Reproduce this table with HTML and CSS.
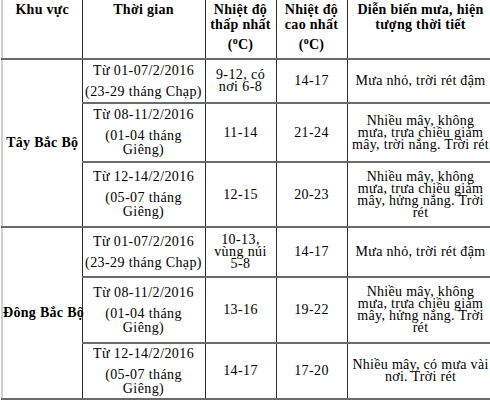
FILE: index.html
```html
<!DOCTYPE html>
<html lang="vi">
<head>
<meta charset="utf-8">
<title>Dự báo thời tiết</title>
<link rel="stylesheet" href="styles.css">
</head>
<body>
<table class="forecast">
  <colgroup>
    <col class="c-area"><col class="c-time"><col class="c-min"><col class="c-max"><col class="c-desc">
  </colgroup>
  <thead>
    <tr class="r-head">
      <th>Khu vực</th>
      <th>Thời gian</th>
      <th><p>Nhiệt độ thấp nhất</p><p class="unit">(<sup>o</sup>C)</p></th>
      <th><p>Nhiệt độ cao nhất</p><p class="unit">(<sup>o</sup>C)</p></th>
      <th class="desc"><p>Diễn biến mưa, hiện<br>tượng thời tiết</p></th>
    </tr>
  </thead>
  <tbody>
    <tr class="r1">
      <td class="area" rowspan="3">Tây Bắc Bộ</td>
      <td class="time"><p>Từ 01-07/2/2016</p><p>(23-29 tháng Chạp)</p></td>
      <td class="tight">9-12, có nơi 6-8</td>
      <td>14-17</td>
      <td class="tight desc">Mưa nhỏ, trời rét đậm</td>
    </tr>
    <tr class="r2">
      <td class="time"><p>Từ 08-11/2/2016</p><p>(01-04 tháng Giêng)</p></td>
      <td>11-14</td>
      <td>21-24</td>
      <td class="tight desc">Nhiều mây, không<br>mưa, trưa chiều giảm<br>mây, trời nắng. Trời rét</td>
    </tr>
    <tr class="r3">
      <td class="time"><p>Từ 12-14/2/2016</p><p>(05-07 tháng Giêng)</p></td>
      <td>12-15</td>
      <td>20-23</td>
      <td class="tight desc">Nhiều mây, không<br>mưa, trưa chiều giảm<br>mây, hửng nắng. Trời<br>rét</td>
    </tr>
    <tr class="r4">
      <td class="area" rowspan="3">Đông Bắc Bộ</td>
      <td class="time"><p>Từ 01-07/2/2016</p><p>(23-29 tháng Chạp)</p></td>
      <td class="tight">10-13, vùng núi 5-8</td>
      <td>14-17</td>
      <td class="tight desc">Mưa nhỏ, trời rét đậm</td>
    </tr>
    <tr class="r5">
      <td class="time"><p>Từ 08-11/2/2016</p><p>(01-04 tháng Giêng)</p></td>
      <td>13-16</td>
      <td>19-22</td>
      <td class="tight desc">Nhiều mây, không<br>mưa, trưa chiều giảm<br>mây, hửng nắng. Trời<br>rét</td>
    </tr>
    <tr class="r6">
      <td class="time"><p>Từ 12-14/2/2016</p><p>(05-07 tháng Giêng)</p></td>
      <td>14-17</td>
      <td>17-20</td>
      <td class="tight desc">Nhiều mây, có mưa vài<br>nơi. Trời rét</td>
    </tr>
  </tbody>
</table>
</body>
</html>
```

FILE: styles.css
```css
html, body {
  margin: 0;
  padding: 0;
  background: #fff;
  overflow: hidden;
}

body {
  padding-left: 1px;
  font-family: "Liberation Serif", "Times New Roman", serif;
  font-size: 14px;
  color: #000;
}

.forecast {
  border-collapse: collapse;
  table-layout: fixed;
  width: 492px;
  border-left: 2px solid #cfcfcf;
}

.c-area { width: 80px; }
.c-time { width: 123px; }
.c-min { width: 71px; }
.c-max { width: 71px; }
.c-desc { width: 147px; }

.forecast th,
.forecast td {
  border-left: 1px solid #2b2b2b;
  border-right: 1px solid #2b2b2b;
  border-top: 2px solid #6a6a6a;
  border-bottom: 2px solid #6a6a6a;
  text-align: center;
  padding: 0 2px;
  letter-spacing: 0.4px;
}

.forecast th {
  border-top: none;
  vertical-align: top;
  font-weight: bold;
  line-height: 15px;
  padding: 2px 3px 0;
  letter-spacing: 0.3px;
}

.forecast .desc {
  padding-left: 0;
  padding-right: 0;
  white-space: nowrap;
}

.forecast td.desc {
  letter-spacing: 0.3px;
}

.forecast th:first-child,
.forecast td.area {
  border-left: 2px solid #cfcfcf;
}

.forecast p {
  margin: 0;
}

.forecast th .unit {
  margin-top: 5px;
}

.forecast sup {
  font-size: 10px;
  line-height: 0;
  vertical-align: 5px;
}

.forecast td {
  vertical-align: middle;
  line-height: 14px;
}

.forecast td.area {
  font-weight: bold;
  padding: 0;
  white-space: nowrap;
  letter-spacing: 0.3px;
}

.forecast td.time p + p {
  margin-top: 7px;
}

.forecast td.tight {
  line-height: 12px;
}

.r-head { height: 59px; }
.r1 { height: 44px; }
.r2 { height: 59px; }
.r3 { height: 65px; }
.r4 { height: 50px; }
.r5 { height: 66px; }
.r6 { height: 56px; }
```
